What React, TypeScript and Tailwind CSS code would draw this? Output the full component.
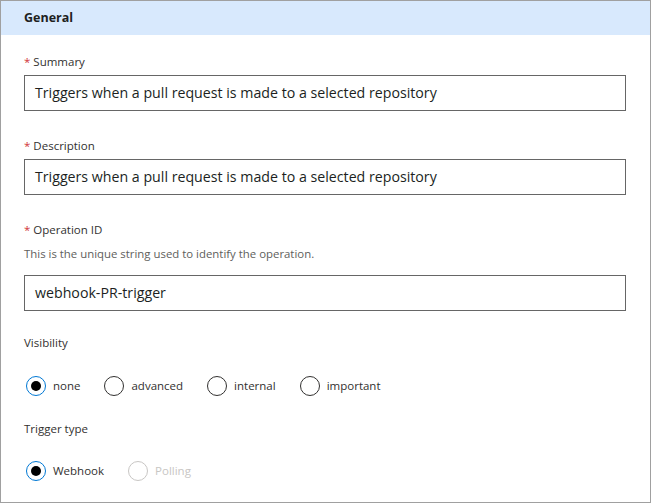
import React from "react";

const font = { fontFamily: '"Open Sans", "Noto Sans", sans-serif' };

function Label({ text, required }: { text: string; required?: boolean }) {
  return (
    <div className="h-[16px] leading-[16px] text-[11.5px] text-[#323130] flex items-center">
      {required && <span className="text-[#d13438] mr-[3px]">*</span>}
      <span>{text}</span>
    </div>
  );
}

function Input({ value }: { value: string }) {
  return (
    <div className="w-[602px] h-[36px] border border-[#666666] flex items-center px-[10px] text-[14.2px] text-[#201f1e]">
      {value}
    </div>
  );
}

function Radio({ label, checked, disabled }: { label: string; checked?: boolean; disabled?: boolean }) {
  const circle = checked
    ? "border-[#0078d4]"
    : disabled
    ? "border-[#c8c6c4]"
    : "border-[#323130]";
  return (
    <div className="flex items-center gap-[7px]">
      <div className={`w-[20px] h-[20px] rounded-full border ${circle} flex items-center justify-center`}>
        {checked && <div className="w-[10px] h-[10px] rounded-full bg-black" />}
      </div>
      <span className={`text-[11.5px] leading-[16px] ${disabled ? "text-[#c8c6c4]" : "text-[#323130]"}`}>{label}</span>
    </div>
  );
}

export default function App() {
  return (
    <div style={font} className="w-[651px] h-[503px] border border-[#a0a0a0] bg-white overflow-hidden">
      <div className="h-[34px] bg-[#d8e9fd] flex items-center pl-[23px] text-[12.5px] font-bold text-[#201f1e]">
        General
      </div>
      <div className="pl-[23px]">
        <div className="mt-[19px]"><Label text="Summary" required /></div>
        <div className="mt-[5px]"><Input value="Triggers when a pull request is made to a selected repository" /></div>
        <div className="mt-[27px]"><Label text="Description" required /></div>
        <div className="mt-[5px]"><Input value="Triggers when a pull request is made to a selected repository" /></div>
        <div className="mt-[27px]"><Label text="Operation ID" required /></div>
        <div className="mt-[8px] h-[16px] leading-[16px] text-[11.4px] text-[#605e5c]">
          This is the unique string used to identify the operation.
        </div>
        <div className="mt-[13px]"><Input value="webhook-PR-trigger" /></div>
        <div className="mt-[24px]"><Label text="Visibility" /></div>
        <div className="mt-[25px] ml-[2px] flex items-center gap-[24px]">
          <Radio label="none" checked />
          <Radio label="advanced" />
          <Radio label="internal" />
          <Radio label="important" />
        </div>
        <div className="mt-[25px]"><Label text="Trigger type" /></div>
        <div className="mt-[24px] ml-[2px] flex items-center gap-[24px]">
          <Radio label="Webhook" checked />
          <Radio label="Polling" disabled />
        </div>
      </div>
    </div>
  );
}
